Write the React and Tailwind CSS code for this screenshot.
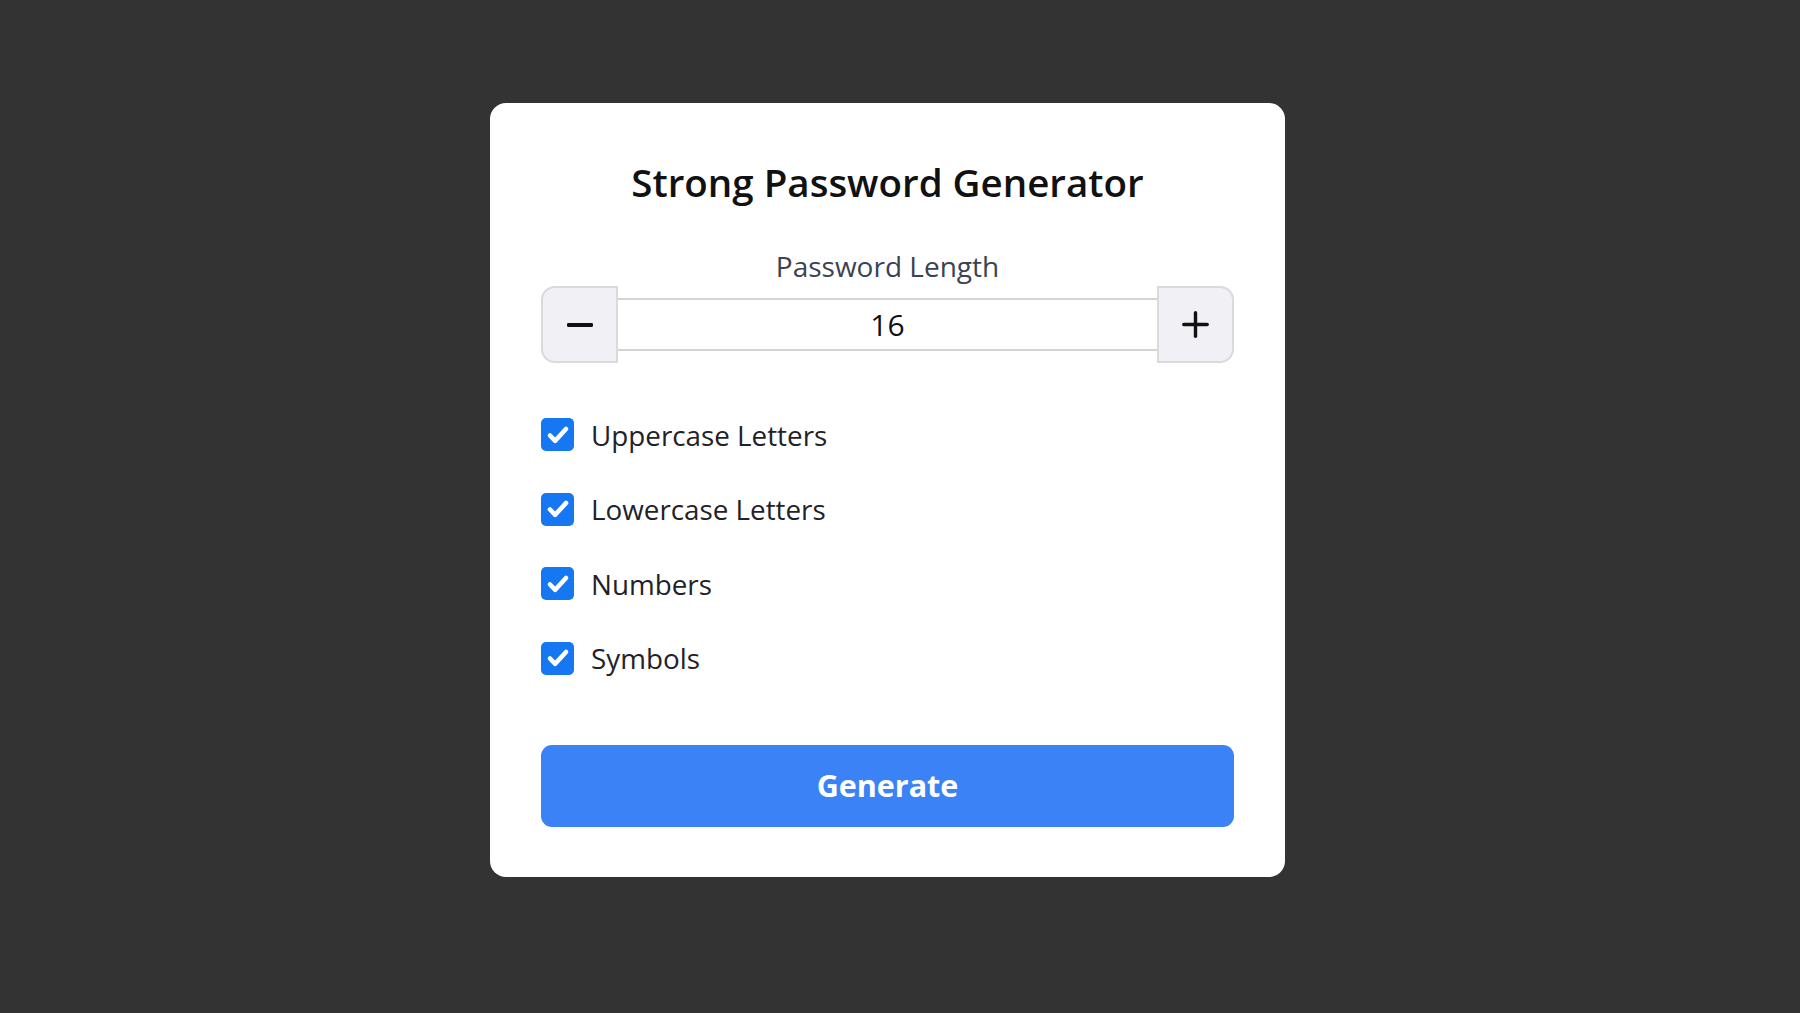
import React, { useState } from "react";

const font = { fontFamily: '"Open Sans", "Noto Sans", "Liberation Sans", sans-serif' };

function Check({ label, checked, onChange }) {
  return (
    <label className="flex items-center h-[33px] cursor-pointer select-none">
      <span
        onClick={onChange}
        className={
          "w-[33px] h-[33px] rounded-[5px] flex items-center justify-center " +
          (checked ? "bg-[#1677f2]" : "bg-white border-2 border-[#767676]")
        }
      >
        {checked && (
          <svg width="26" height="26" viewBox="0 0 26 26" fill="none">
            <path d="M5 13.5 L10.2 18.8 L21 7" stroke="white" strokeWidth="4.6" strokeLinecap="round" strokeLinejoin="round" />
          </svg>
        )}
      </span>
      <span className="ml-[17px] text-[27.8px] leading-[36px] text-[#1f2229]">{label}</span>
    </label>
  );
}

export default function App() {
  const [len, setLen] = useState(16);
  const [opts, setOpts] = useState({ upper: true, lower: true, num: true, sym: true });
  const toggle = (k) => setOpts((o) => ({ ...o, [k]: !o[k] }));

  return (
    <div className="min-h-screen bg-[#333333] flex justify-center pt-[103px] pr-[25px]" style={font}>
      <div className="w-[795px] h-[774px] bg-white rounded-[16px] px-[51px] pt-[56px] pb-[50px] flex flex-col">
        <h1 className="text-[38.5px] leading-[46px] font-semibold text-center text-[#111111] whitespace-nowrap">
          Strong Password Generator
        </h1>
        <div className="mt-[43px] text-[28px] leading-[36px] text-center text-[#3b4352]">
          Password Length
        </div>
        <div className="mt-[2px] flex items-center h-[77px]">
          <button
            onClick={() => setLen((l) => Math.max(4, l - 1))}
            className="w-[77px] h-[77px] shrink-0 rounded-l-[14px] bg-[#f1f1f5] border-2 border-[#d9d9de] flex items-center justify-center"
          >
            <svg width="26" height="6" viewBox="0 0 26 6">
              <line x1="1.5" y1="3" x2="24.5" y2="3" stroke="#111" strokeWidth="3.8" strokeLinecap="round" />
            </svg>
          </button>
          <div className="flex-1 h-[53px] border-y-2 border-[#d4d4d8] flex items-center justify-center text-[30px] text-[#111111]">
            {len}
          </div>
          <button
            onClick={() => setLen((l) => Math.min(64, l + 1))}
            className="w-[77px] h-[77px] shrink-0 rounded-r-[14px] bg-[#f1f1f5] border-2 border-[#d9d9de] flex items-center justify-center"
          >
            <svg width="27" height="27" viewBox="0 0 27 27">
              <line x1="1.8" y1="13.5" x2="25.2" y2="13.5" stroke="#111" strokeWidth="3.4" strokeLinecap="round" />
              <line x1="13.5" y1="1.8" x2="13.5" y2="25.2" stroke="#111" strokeWidth="3.4" strokeLinecap="round" />
            </svg>
          </button>
        </div>
        <div className="mt-[55px] flex flex-col gap-[41.5px]">
          <Check label="Uppercase Letters" checked={opts.upper} onChange={() => toggle("upper")} />
          <Check label="Lowercase Letters" checked={opts.lower} onChange={() => toggle("lower")} />
          <Check label="Numbers" checked={opts.num} onChange={() => toggle("num")} />
          <Check label="Symbols" checked={opts.sym} onChange={() => toggle("sym")} />
        </div>
        <button className="mt-auto h-[82px] w-full rounded-[11px] bg-[#3b82f6] text-white text-[30.5px] font-bold">
          Generate
        </button>
      </div>
    </div>
  );
}
